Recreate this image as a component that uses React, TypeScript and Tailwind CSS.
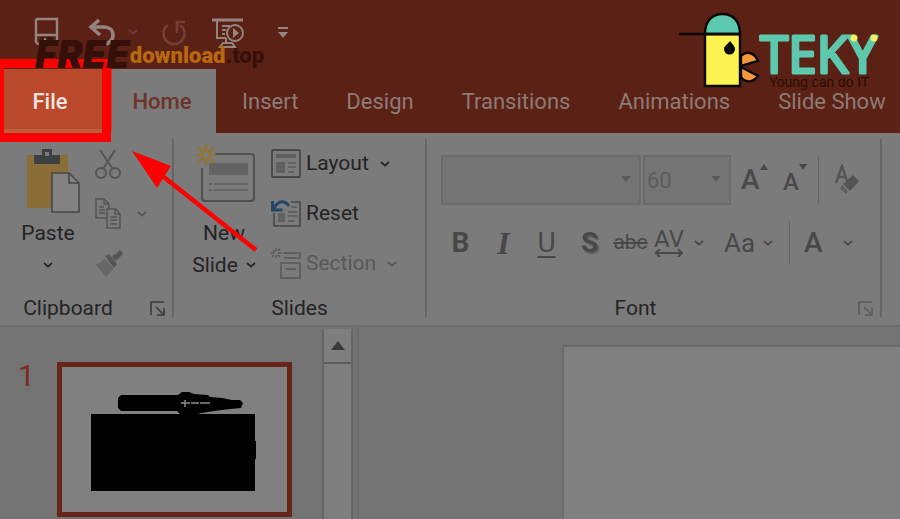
import type { ReactNode } from "react";

const TABS = ["Insert", "Design", "Transitions", "Animations", "Slide Show"];

function Chevron({ className = "" }: { className?: string }) {
  return (
    <svg viewBox="0 0 10 6" className={`h-1.5 w-2.5 shrink-0 ${className}`} fill="none" stroke="currentColor" strokeWidth="1.8">
      <path d="M1 1l4 3.6L9 1" />
    </svg>
  );
}

function Divider() {
  return <div className="mt-1.5 mb-2 w-0.5 shrink-0 bg-[#656565]" />;
}

function Launcher({ label, className = "" }: { label: string; className?: string }) {
  return (
    <button aria-label={label} className={`w-9 pl-3.5 ${className}`}>
      <svg viewBox="0 0 16 16" className="h-4 w-4" fill="none" stroke="currentColor" strokeWidth="1.6">
        <path d="M1 14V1h13M6 6l8 8M14 7v7H7" />
      </svg>
    </button>
  );
}

interface GroupProps {
  label: string;
  className?: string;
  launcher?: ReactNode;
  children: ReactNode;
}

function Group({ label, className = "", launcher, children }: GroupProps) {
  return (
    <section aria-label={label} className={`flex shrink-0 flex-col pt-1.5 pb-0.5 ${className}`}>
      <div className="flex h-[156px] items-start">{children}</div>
      <div className="flex h-7 items-center">
        <span className="flex-1 text-center">{label}</span>
        {launcher}
      </div>
    </section>
  );
}

function QuickAccess() {
  return (
    <div className="flex h-[69px] items-start pt-[17px] pl-[34px] text-[#938480]">
      <button aria-label="Save">
        <svg viewBox="0 0 26 30" className="h-[30px] w-[26px]" fill="none" stroke="currentColor" strokeWidth="2.4">
          <path d="M3 2h20v25H4l-2-2V3zM3 18h20" />
          <path d="M7 20h12v7H7z" fill="#3a1610" stroke="none" />
          <path d="M11 21v5" />
        </svg>
      </button>
      <button aria-label="Undo" className="ml-7 flex items-start">
        <svg viewBox="0 0 28 30" className="h-[30px] w-7" fill="none" stroke="currentColor" strokeWidth="3.6">
          <path d="M11 3L3 10l9 8M3 10h13c5 0 9 3 9 8s-4 9-9 9" />
        </svg>
        <Chevron className="mt-3 ml-3 text-[#6f4036]" />
      </button>
      <button aria-label="Redo" className="ml-6 text-[#743f33]">
        <svg viewBox="0 0 24 30" className="h-[30px] w-6" fill="none" stroke="currentColor" strokeWidth="2.6">
          <path d="M6 8a10.500 10.500 0 1 0 12 0M15 16V5h8" />
        </svg>
      </button>
      <button aria-label="Start slide show" className="ml-[26px]">
        <svg viewBox="0 0 32 32" className="h-8 w-8" fill="none" stroke="currentColor" strokeWidth="2">
          <path d="M0 3h31" strokeWidth="3" />
          <path d="M5 4v17h9M10 9h8M10 13h4M10 17h3M14 21v6M8 30h15l-3-4h-9z" />
          <circle cx="23" cy="16" r="8" />
          <path d="M21 11l6 5-6 5z" fill="currentColor" stroke="none" />
        </svg>
      </button>
      <button aria-label="Customize toolbar" className="mt-2.5 ml-[34px]">
        <svg viewBox="0 0 10 12" className="h-3 w-2.5" fill="currentColor">
          <path d="M0 0h10v2H0zM0 5h10l-5 6z" />
        </svg>
      </button>
    </div>
  );
}

function FreeDownloadMark() {
  return (
    <div className="absolute top-10 left-[35px] flex items-end leading-none">
      <span className="font-[Inter,sans-serif] text-[38px] leading-7 font-black text-[#35100a] italic">FREE</span>
      <span className="text-[22px] leading-6 font-black text-[#b8690f]">download</span>
      <span className="text-[22px] leading-6 font-black text-[#35100a]">.top</span>
    </div>
  );
}

function TekyLogo() {
  return (
    <svg viewBox="0 0 204 80" className="absolute top-3 right-[18px] h-20 w-[204px]" role="img" aria-label="TEKY Young can do IT">
      <g stroke="#0b0805" strokeWidth="2.400">
        <path d="M27 22h35v52H27z" fill="#fdf351" />
        <path d="M27 22C27 9 34 2 44.500 2S62 9 62 22z" fill="#5cc9ae" />
        <path d="M1 22h61" />
        <path d="M63 44c6-6 14-3 17 5l-17 5zM63 55l17 9c-5 7-13 7-17 1z" fill="#f9983a" />
      </g>
      <path d="M52 29c2 3 5 5 5 8a5.500 5.500 0 0 1-11 0c0-3 4-5 6-8z" fill="#000" />
      <text x="82" y="61" fill="#5cc9ae" stroke="#5cc9ae" strokeWidth="3" strokeLinejoin="round" className="font-['Noto_Sans',sans-serif] text-[51px]">
        TEKY
      </text>
      <circle cx="176" cy="26" r="3.500" fill="#f6f25c" />
      <circle cx="196" cy="26" r="3.500" fill="#f6f25c" />
      <text x="91" y="75" fill="#260c07" className="font-[Inter,sans-serif] text-[13px]">
        Young can do IT
      </text>
    </svg>
  );
}

function Header() {
  return (
    <header className="relative z-10 bg-[#5c2115]">
      <QuickAccess />
      <nav className="flex h-16 whitespace-nowrap text-[22px] text-[#8d7b76]">
        <button className="relative w-28 shrink-0 border-b-4 border-[#bd5b3d] bg-[#b9492a] pt-1 pr-3 font-medium text-[#eee3df]">
          File
          <span className="absolute -top-2.5 -bottom-[13px] left-0 w-[111px] border-9 border-l-4 border-[#fe0000]" />
        </button>
        <button className="w-[104px] shrink-0 bg-[#7b7b7b] pr-1 font-medium text-[#6d342a]">Home</button>
        <div className="flex min-w-0 flex-1 overflow-hidden pl-0.5">
          {TABS.map((tab) => (
            <button key={tab} className="shrink-0 px-6">
              {tab}
            </button>
          ))}
        </div>
      </nav>
      <FreeDownloadMark />
      <TekyLogo />
    </header>
  );
}

function ClipboardGroup() {
  return (
    <Group label="Clipboard" className="w-[172px]" launcher={<Launcher label="Clipboard options" className="text-[#3b3b3b]" />}>
      <button className="ml-4 flex w-16 flex-col items-center pt-2">
        <svg viewBox="0 0 66 66" className="h-[66px] w-[66px]">
          <path d="M12 8h41v53H12z" fill="#8a6d38" />
          <path d="M19 8h8V2h10v6h8v9H19z" fill="#3d4043" />
          <path d="M30 5h4v4h-4z" fill="#7b7b7b" />
          <path d="M37 26h17l10 10v29H37z" fill="#828282" stroke="#474747" strokeWidth="1.600" />
          <path d="M54 26v10h10" fill="none" stroke="#474747" strokeWidth="1.600" />
        </svg>
        <span className="mt-1 leading-8">Paste</span>
        <span className="flex h-8 items-center"><Chevron /></span>
      </button>
      <div className="ml-[15px] flex flex-col text-[#545454]">
        <button aria-label="Cut" className="flex h-[50px] items-center">
          <svg viewBox="0 0 26 32" className="h-8 w-[26px]" fill="none" stroke="currentColor" strokeWidth="2">
            <path d="M5 2l13 19M20 2L8 21" />
            <circle cx="6" cy="25" r="5" />
            <circle cx="20" cy="25" r="5" />
          </svg>
        </button>
        <button aria-label="Copy" className="flex h-[50px] items-center gap-4">
          <svg viewBox="0 0 26 32" className="h-8 w-[26px]" fill="none" stroke="currentColor" strokeWidth="1.500">
            <path d="M12 20H1V1h8l5 5v4M9 1v5h5M4 9h5M4 12h6M4 15h6" />
            <path d="M12 11h9l4 5v14H12zM20 11v5h5M15 19h7M15 22h7M15 26h7" />
          </svg>
          <Chevron />
        </button>
        <button aria-label="Format painter" className="flex h-[50px] items-center">
          <svg viewBox="0 0 28 30" className="h-[30px] w-7">
            <path d="M19 7l6-6 3 4-6 6z" fill="#555" />
            <path d="M10 7l4-2 8 10-3 4z" fill="#555" />
            <path d="M17 7l3-2 3 4-3 3z" fill="#555" />
            <path d="M9 9l10 10-8 9L0 15c4 0 7-2 9-6z" fill="#676767" />
          </svg>
        </button>
      </div>
    </Group>
  );
}

function SlidesGroup() {
  return (
    <Group label="Slides" className="w-[251px]">
      <button className="ml-3.5 flex w-[72px] flex-col items-center pt-1">
        <svg viewBox="0 0 72 70" className="h-[70px] w-[72px]" fill="none">
          <path d="M27 11h36q3 0 3 3v41q0 3-3 3H17q-3 0-3-3V25" stroke="#505050" strokeWidth="2" />
          <path d="M21 20h39v12H21z" fill="#636363" />
          <path d="M21 41h3M26 41h34M21 47h3M26 47h34" stroke="#646464" strokeWidth="2" />
          <g stroke="#96742f" strokeWidth="2">
            <circle cx="18" cy="12" r="4" />
            <path d="M18 1v6M18 17v6M8 12h5M23 12h5M10 4l5 5M21 15l5 5M26 4l-5 5M15 15l-5 5" />
          </g>
        </svg>
        <span className="mt-1 leading-8">New</span>
        <span className="flex h-8 items-center gap-2 leading-8">Slide <Chevron /></span>
      </button>
      <div className="ml-[11px] flex flex-col">
        <button className="flex h-[50px] items-center gap-[5px]">
          <svg viewBox="0 0 30 30" className="h-[30px] w-[30px]" fill="none">
            <rect x="1" y="1" width="28" height="27" rx="1" stroke="#484848" strokeWidth="1.800" />
            <path d="M5 5h20v4H5zM5 13h9v11H5z" fill="#606060" />
            <path d="M17 14h8M17 18h8M17 23h6" stroke="#606060" strokeWidth="2" />
          </svg>
          Layout <Chevron className="ml-1.5" />
        </button>
        <button className="flex h-[50px] items-center gap-[5px]">
          <svg viewBox="0 0 30 30" className="h-[30px] w-[30px]" fill="none">
            <path d="M20 3h9v24H3V14" stroke="#484848" strokeWidth="1.600" />
            <path d="M7 14h7v9H7z" fill="#626262" />
            <path d="M20 8h6M17 13h9M17 17h9M17 22h7" stroke="#606060" strokeWidth="2" />
            <path d="M1.500 2v9h10M2 11C6 2 13 0 18 7" stroke="#254766" strokeWidth="3" />
          </svg>
          Reset
        </button>
        <button className="flex h-[50px] items-center gap-[5px] text-[#585858]">
          <svg viewBox="0 0 30 32" className="h-8 w-[30px]" fill="none" stroke="currentColor" strokeWidth="1.500">
            <path d="M12 5h17v5H13M10 15h19v15H10zM14 21h11" />
            <path d="M5 0v3M5 7v3M0 5h3M7 5h4M2 2l2 2M7 7l2 2M9 1L7 3M3 7L1 9" />
          </svg>
          Section <Chevron className="ml-1.5" />
        </button>
      </div>
    </Group>
  );
}

function DropArrow() {
  return (
    <svg viewBox="0 0 10 6" className="pointer-events-none absolute top-[21px] right-2.5 h-1.5 w-2.5" fill="#5b5b5b">
      <path d="M0 0h10L5 6z" />
    </svg>
  );
}

function FontGroup() {
  return (
    <Group label="Font" className="w-[453px]" launcher={<Launcher label="Font options" className="text-[#5c5c5c]" />}>
      <div className="flex flex-col pt-4 text-[#484848]">
        <div className="flex h-[50px] items-center">
          <div className="relative ml-3.5 h-full w-[200px]">
            <select aria-label="Font name" className="h-full w-full appearance-none border-2 border-[#6b6b6b] bg-[#747474]">
              <option></option>
            </select>
            <DropArrow />
          </div>
          <div className="relative ml-0.5 h-full w-[88px]">
            <select aria-label="Font size" defaultValue="60" className="h-full w-full appearance-none border-2 border-[#6b6b6b] bg-[#747474] pl-0.5 text-[22px] text-[#5d5d5d]">
              <option>60</option>
            </select>
            <DropArrow />
          </div>
          <button aria-label="Increase font size" className="ml-2.5 flex h-8 w-[26px] items-start">
            <span className="text-[28px] leading-8 font-medium">A</span>
            <svg viewBox="0 0 8 6" className="h-1.5 w-2 shrink-0" fill="currentColor"><path d="M0 6h8L4 0z" /></svg>
          </button>
          <button aria-label="Decrease font size" className="ml-4 flex h-8 w-[26px] items-start">
            <span className="text-[24px] leading-9 font-medium">A</span>
            <svg viewBox="0 0 8 6" className="h-1.5 w-2 shrink-0" fill="currentColor"><path d="M0 0h8L4 6z" /></svg>
          </button>
          <span className="ml-[9px] h-12 w-px bg-[#666]" />
          <button aria-label="Clear formatting" className="ml-4">
            <svg viewBox="0 0 26 32" className="h-8 w-[26px]" fill="none">
              <path d="M1 19L7 2l5 15M3 13h7" stroke="#545454" strokeWidth="2.400" />
              <path d="M18 11l6 6-9 10-7-7z" fill="#545454" />
              <path d="M7 21l6 6-2 3-6-6z" fill="#5d5d5d" />
            </svg>
          </button>
        </div>
        <div className="mt-4 ml-3 flex h-11 items-center text-[28px]">
          <button aria-label="Bold" className="w-[43px] font-bold">B</button>
          <button aria-label="Italic" className="w-[43px] font-['Liberation_Serif',serif] text-[32px] font-bold italic">I</button>
          <button aria-label="Underline" className="w-[43px] underline decoration-2 underline-offset-4">U</button>
          <button aria-label="Text shadow" className="w-[43px] font-bold [text-shadow:2px_2px_1px_#5f5f5f]">S</button>
          <button aria-label="Strikethrough" className="w-[43px] pr-1 text-[21px] line-through">abc</button>
          <button aria-label="Character spacing" className="flex items-center gap-2.5">
            <span className="flex flex-col items-center text-[24px] leading-5">
              AV
              <svg viewBox="0 0 28 8" className="h-2 w-7" fill="none" stroke="currentColor" strokeWidth="2">
                <path d="M1 4h26M5 0L1 4l4 4M23 0l4 4-4 4" />
              </svg>
            </span>
            <Chevron />
          </button>
          <button aria-label="Change case" className="ml-5 flex items-center gap-2">
            <span className="text-[26px]">Aa</span>
            <Chevron />
          </button>
          <span className="ml-4 h-11 w-px bg-[#666]" />
          <button aria-label="Font color" className="ml-3.5 flex items-center gap-5">
            <span className="font-medium">A</span>
            <Chevron />
          </button>
        </div>
      </div>
    </Group>
  );
}

function PointerArrow() {
  return (
    <svg viewBox="0 0 126 102" className="pointer-events-none absolute top-[18px] left-[132px] h-[102px] w-[126px]">
      <path d="M28 23l96 76" stroke="#fe0000" strokeWidth="4.500" />
      <path d="M0 0l39 15-14 22z" fill="#fe0000" />
    </svg>
  );
}

function Thumbnails() {
  return (
    <aside className="flex w-[322px] shrink-0 items-start pt-[35px]">
      <span className="w-[57px] pl-[18px] text-[30px] leading-7 text-[#7b2c1e]">1</span>
      <button aria-label="Slide 1" className="h-[155px] w-[235px] border-5 border-[#672518] bg-[#808080]">
        <svg viewBox="0 0 225 145" className="h-full w-full">
          <path d="M29 47h164v27h1v18h-1v32H29z" />
          <path d="M59 28h57l4-3h7l5 2 14 1 2 2 12 1 10 2h8l3 3-2 5-11 1-16 2-12 2-9 2h-12l-4-4H59l-3-3V31z" />
          <path d="M119 36h9M123 33v7M129 36h8M138 36h10" stroke="#8a8a8a" strokeWidth="1.500" />
        </svg>
      </button>
    </aside>
  );
}

function Workspace() {
  return (
    <main className="flex flex-1 border-t-2 border-[#6d6d6d] bg-[#737373]">
      <Thumbnails />
      <div className="mt-0.5 flex w-[31px] shrink-0 flex-col border-x-2 border-[#656565]">
        <button aria-label="Scroll up" className="flex h-[35px] items-center justify-center border-b-2 border-[#5c5c5c] bg-[#7e7e7e]">
          <svg viewBox="0 0 14 9" className="h-[9px] w-3.5" fill="#393939"><path d="M0 9h14L7 0z" /></svg>
        </button>
        <div className="flex-1 bg-[#7f7f7f]" />
      </div>
      <div className="ml-1 w-0.5 bg-[#6b6b6b]" />
      <div className="flex min-w-0 flex-1 pt-[18px] pl-[203px]">
        <div className="flex-1 border-t-2 border-l-2 border-[#6a6a6a] bg-[#808080]" />
      </div>
    </main>
  );
}

export default function App() {
  return (
    <div className="flex min-h-screen flex-col overflow-hidden bg-[#737373] font-[Roboto,'Noto_Sans',sans-serif] text-[21px] text-[#242424]">
      <Header />
      <div className="relative flex bg-[#7b7b7b]">
        <ClipboardGroup />
        <Divider />
        <SlidesGroup />
        <Divider />
        <FontGroup />
        <Divider />
        <PointerArrow />
      </div>
      <Workspace />
    </div>
  );
}
